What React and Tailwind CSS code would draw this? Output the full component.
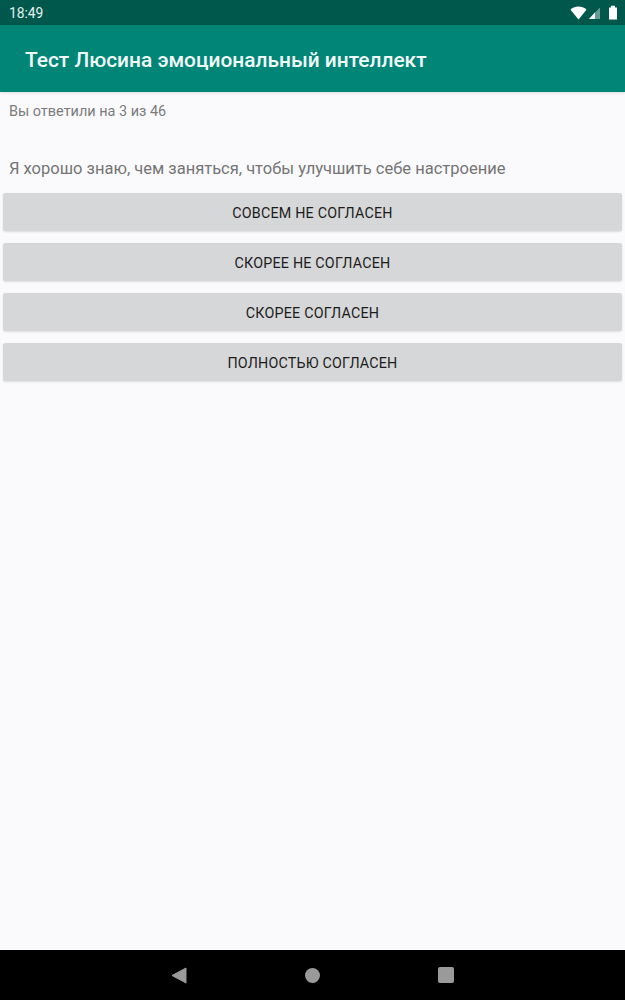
import React from "react";

const answers = ["Совсем не согласен", "Скорее не согласен", "Скорее согласен", "Полностью согласен"];

const App = () => {
  return (
    <div className="flex flex-col w-[625px] h-[1000px] bg-[#fafafc] font-['Roboto',sans-serif] overflow-hidden">
      {/* status bar */}
      <div className="flex items-center justify-between h-[25px] shrink-0 bg-[#00574b] pl-[9px] pr-[7px]">
        <span className="pt-[2px] text-[13.8px] leading-none text-[#e6f2ef]">18:49</span>
        <div className="flex items-center">
          <svg width="17" height="14" viewBox="0 0 17 14">
            <path d="M0.5 3.8C5 -0.6 12 -0.6 16.5 3.8L8.5 13.5Z" fill="#ffffff" />
          </svg>
          <svg width="13" height="14" viewBox="0 0 13 14" className="ml-[1px]">
            <path d="M12 1.5V13H1Z" fill="#ffffff" fillOpacity="0.4" />
            <path d="M7 6.3V13H1Z" fill="#ffffff" fillOpacity="0.9" />
          </svg>
          <svg width="10" height="15" viewBox="0 0 10 15" className="ml-[7px]">
            <path d="M1 2.5H3V0.8H7V2.5H9V14.5H1Z" fill="#ffffff" />
          </svg>
        </div>
      </div>

      {/* app bar */}
      <div className="flex items-center h-[67px] shrink-0 bg-[#008577] pl-[25px] pt-[4px] shadow-[0_1px_3px_rgba(0,0,0,0.12)]">
        <h1 className="text-[20.9px] font-medium text-[#f2fbf9]">Тест Люсина эмоциональный интеллект</h1>
      </div>

      {/* content */}
      <main className="flex-1 flex flex-col">
        <p className="pl-[9px] mt-[11px] text-[14.45px] leading-[18px] text-[#7b7b7b]">Вы ответили на 3 из 46</p>
        <p className="pl-[9px] mt-[37px] text-[16.5px] leading-[22px] text-[#757575]">
          Я хорошо знаю, чем заняться, чтобы улучшить себе настроение
        </p>
        <div className="flex flex-col gap-[12px] mt-[13px] px-[3px]">
          {answers.map((answer) => (
            <button
              key={answer}
              type="button"
              className="h-[38px] pt-[3px] rounded-[2px] bg-[#d6d7d8] text-[14.3px] font-normal uppercase text-[#1c1c1c] tracking-[0.2px] shadow-[0_1px_2px_rgba(0,0,0,0.12)]"
            >
              {answer}
            </button>
          ))}
        </div>
      </main>

      {/* navigation bar */}
      <nav className="flex items-center justify-center gap-[118px] h-[50px] shrink-0 bg-black pr-[1px]">
        <svg width="16" height="17" viewBox="0 0 16 17">
          <path d="M15 1V16L1 8.5Z" fill="#9a9a9a" stroke="#9a9a9a" strokeLinejoin="round" />
        </svg>
        <span className="w-[15px] h-[15px] rounded-full bg-[#9a9a9a]" />
        <span className="w-[16px] h-[16px] rounded-[2px] bg-[#9a9a9a]" />
      </nav>
    </div>
  );
};

export default App;
